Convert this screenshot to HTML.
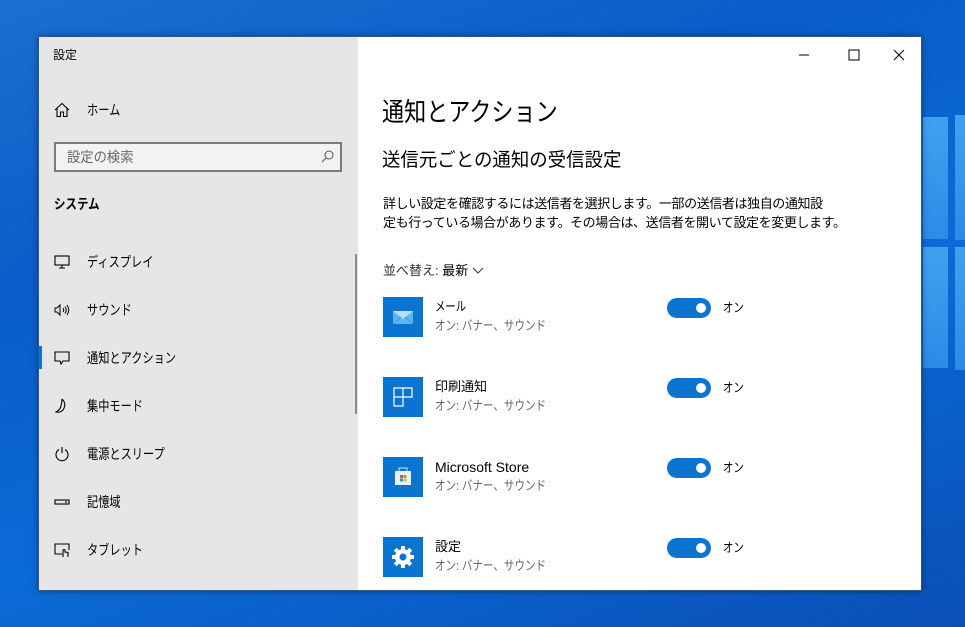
<!DOCTYPE html>
<html><head><meta charset="utf-8"><style>
*{margin:0;padding:0;box-sizing:border-box}
body{width:965px;height:627px;overflow:hidden;position:relative;font-family:"Liberation Sans","Noto Sans CJK JP",sans-serif;
background:linear-gradient(160deg,#1a6fd0 0%,#0a5cc8 30%,#0b6ad6 60%,#0a4fb6 100%);}
.abs{position:absolute}
.pane{position:absolute;background:linear-gradient(180deg,#45a8f2,#2f8fe8);opacity:.9}
.win{position:absolute;left:38px;top:36px;width:884px;height:555px;background:#fff;box-shadow:0 0 6px rgba(0,0,0,.4);border:1px solid #2a5a8a}
.side{position:absolute;left:0;top:0;width:319px;height:100%;background:#e6e6e6}
.t{position:absolute;white-space:nowrap;color:#000;line-height:16px;transform-origin:0 50%}
.nav{position:absolute;left:15px;font-size:14px;color:#000}
.nav svg{position:absolute;left:0;top:0}
.nav span{position:absolute;left:33px;top:-2px;white-space:nowrap;transform:scaleX(.8);transform-origin:0 50%}
.icon{position:absolute;left:344px;width:40px;height:40px;background:#0b74d0}
.tg{position:absolute;left:628px;width:44px;height:20px;border-radius:10px;background:#0b74d0}
.tg:after{content:"";position:absolute;right:5px;top:5px;width:10px;height:10px;border-radius:50%;background:#fff}
.sub{font-size:13px;color:#666;transform:scaleX(.81)}
.on{font-size:13px;transform:scaleX(.8)}
</style></head><body>
<div class="pane" style="left:923px;top:117px;width:25px;height:122px"></div>
<div class="pane" style="left:955px;top:115px;width:12px;height:125px"></div>
<div class="pane" style="left:923px;top:247px;width:25px;height:121px"></div>
<div class="pane" style="left:955px;top:247px;width:12px;height:123px"></div>
<div class="win">
 <div class="side">
  <div class="t" style="left:14px;top:10px;font-size:12px">設定</div>
  <div class="nav" style="top:65px"><svg width="16" height="16" viewBox="0 0 16 16" fill="none" stroke="#000" stroke-width="1.1"><path d="M1 8 L8 1.5 L15 8 M3 6.5 V14.5 H6.5 V10 H9.5 V14.5 H13 V6.5"/></svg><span>ホーム</span></div>
  <div class="abs" style="left:15px;top:105px;width:288px;height:30px;border:2px solid #7a7a7a;background:#f2f2f2"></div>
  <div class="t" style="left:28px;top:112px;font-size:14px;color:#666;transform:scaleX(.95)">設定の検索</div>
  <svg class="abs" style="left:282px;top:113px" width="13" height="13" viewBox="0 0 13 13" fill="none" stroke="#555" stroke-width="1"><circle cx="8" cy="5" r="4"/><path d="M5 8 L1 12"/></svg>
  <div class="t" style="left:15px;top:159px;font-size:14px;font-weight:bold;transform:scaleX(.82)">システム</div>
  <div class="nav" style="top:217px"><svg width="16" height="16" viewBox="0 0 16 16" fill="none" stroke="#000" stroke-width="1.1"><rect x="1" y="2" width="14" height="9"/><path d="M8 11 V14 M5 14 H11"/></svg><span>ディスプレイ</span></div>
  <div class="nav" style="top:265px"><svg width="16" height="16" viewBox="0 0 16 16" fill="none" stroke="#000" stroke-width="1"><path d="M1 6 H3 L6 3 V13 L3 10 H1 Z M9 6 Q10.5 8 9 10 M11 4.5 Q13.5 8 11 11.5 M13 3 Q16.5 8 13 13"/></svg><span>サウンド</span></div>
  <div class="abs" style="left:0;top:309px;width:3px;height:23px;background:#0b74d0"></div>
  <div class="nav" style="top:313px"><svg width="16" height="16" viewBox="0 0 16 16" fill="none" stroke="#000" stroke-width="1.1"><path d="M1 2 H15 V11 H9 L7 14 L6 11 H1 Z"/></svg><span>通知とアクション</span></div>
  <div class="nav" style="top:361px"><svg width="16" height="16" viewBox="0 0 16 16" fill="none" stroke="#000" stroke-width="1.1"><path d="M8 1 Q13 6 9 12 Q6 15 2 14 Q6 12 7 8 Q8 4 8 1"/></svg><span>集中モード</span></div>
  <div class="nav" style="top:409px"><svg width="16" height="16" viewBox="0 0 16 16" fill="none" stroke="#000" stroke-width="1.1"><path d="M8 1 V7 M5 3.5 A6 6 0 1 0 11 3.5"/></svg><span>電源とスリープ</span></div>
  <div class="nav" style="top:457px"><svg width="16" height="16" viewBox="0 0 16 16" fill="none" stroke="#000" stroke-width="1.1"><rect x="1" y="6" width="14" height="4"/><path d="M11 8 H13"/></svg><span>記憶域</span></div>
  <div class="nav" style="top:505px"><svg width="16" height="16" viewBox="0 0 16 16" fill="none" stroke="#000" stroke-width="1.1"><path d="M8 12 H1 V2 H15 V8 M9 15 V8 Q10.5 7 11 8 V10 L14 10.5 V15"/></svg><span>タブレット</span></div>
  <div class="abs" style="left:316px;top:217px;width:2px;height:160px;background:#8a8a8a"></div>
 </div>
 <svg class="abs" style="left:760px;top:12px" width="110" height="12" fill="none" stroke="#000" stroke-width="1"><path d="M0 6 H10 M50 1 H60 V11 H50 Z M95 1 L105 11 M105 1 L95 11"/></svg>
 <div class="t" style="left:343px;top:60px;font-size:26px;line-height:30px;transform:scaleX(.85)">通知とアクション</div>
 <div class="t" style="left:343px;top:113px;font-size:19px;line-height:22px;transform:scaleX(.97)">送信元ごとの通知の受信設定</div>
 <div class="t" style="left:344px;top:157px;font-size:13px;line-height:19px;letter-spacing:-0.4px">詳しい設定を確認するには送信者を選択します。一部の送信者は独自の通知設<br>定も行っている場合があります。その場合は、送信者を開いて設定を変更します。</div>
 <div class="t" style="left:344px;top:226px;font-size:13px;color:#333">並べ替え: <span style="color:#000">最新</span> <svg width="12" height="8" viewBox="0 0 12 8" fill="none" stroke="#333"><path d="M1 1 L6 6 L11 1"/></svg></div>

 <div class="icon" style="top:260px"><svg width="40" height="40"><path d="M10 14 H30 V27 H10 Z" fill="#5fb4f4"/><path d="M10 14 L20 22 L30 14" fill="#b8dcfa"/><path d="M10 27 L18 20 M30 27 L22 20" stroke="#3a9ae8"/></svg></div>
 <div class="t" style="left:396px;top:262px;font-size:13px;transform:scaleX(.8)">メール</div>
 <div class="t sub" style="left:396px;top:281px">オン: バナー、サウンド</div>
 <div class="tg" style="top:261px"></div><div class="t on" style="left:684px;top:263px">オン</div>

 <div class="icon" style="top:340px"><svg width="40" height="40" fill="none" stroke="#fff" stroke-width="1.2"><path d="M11 11 H29 V20 H11 Z M20 11 V29 H11 V11 M11 20 H20"/></svg></div>
 <div class="t" style="left:396px;top:342px;font-size:13px">印刷通知</div>
 <div class="t sub" style="left:396px;top:361px">オン: バナー、サウンド</div>
 <div class="tg" style="top:341px"></div><div class="t on" style="left:684px;top:343px">オン</div>

 <div class="icon" style="top:420px"><svg width="40" height="40"><path d="M16 14 V11 H24 V14" fill="none" stroke="#cfe6fb"/><rect x="12" y="14" width="16" height="14" fill="#e8f2fc"/><rect x="17" y="18" width="3" height="3" fill="#f25022"/><rect x="20.5" y="18" width="3" height="3" fill="#7fba00"/><rect x="17" y="21.5" width="3" height="3" fill="#00a4ef"/><rect x="20.5" y="21.5" width="3" height="3" fill="#ffb900"/></svg></div>
 <div class="t" style="left:396px;top:422px;font-size:14px">Microsoft Store</div>
 <div class="t sub" style="left:396px;top:441px">オン: バナー、サウンド</div>
 <div class="tg" style="top:421px"></div><div class="t on" style="left:684px;top:423px">オン</div>

 <div class="icon" style="top:500px"><svg width="40" height="40"><g transform="translate(20 20)" fill="#fff"><circle r="8"/><g id="th"><rect x="-2" y="-11" width="4" height="5"/></g><use href="#th" transform="rotate(45)"/><use href="#th" transform="rotate(90)"/><use href="#th" transform="rotate(135)"/><use href="#th" transform="rotate(180)"/><use href="#th" transform="rotate(225)"/><use href="#th" transform="rotate(270)"/><use href="#th" transform="rotate(315)"/><circle r="3.5" fill="#0b74d0"/></g></svg></div>
 <div class="t" style="left:396px;top:502px;font-size:13px">設定</div>
 <div class="t sub" style="left:396px;top:521px">オン: バナー、サウンド</div>
 <div class="tg" style="top:501px"></div><div class="t on" style="left:684px;top:503px">オン</div>
</div>
</body></html>
